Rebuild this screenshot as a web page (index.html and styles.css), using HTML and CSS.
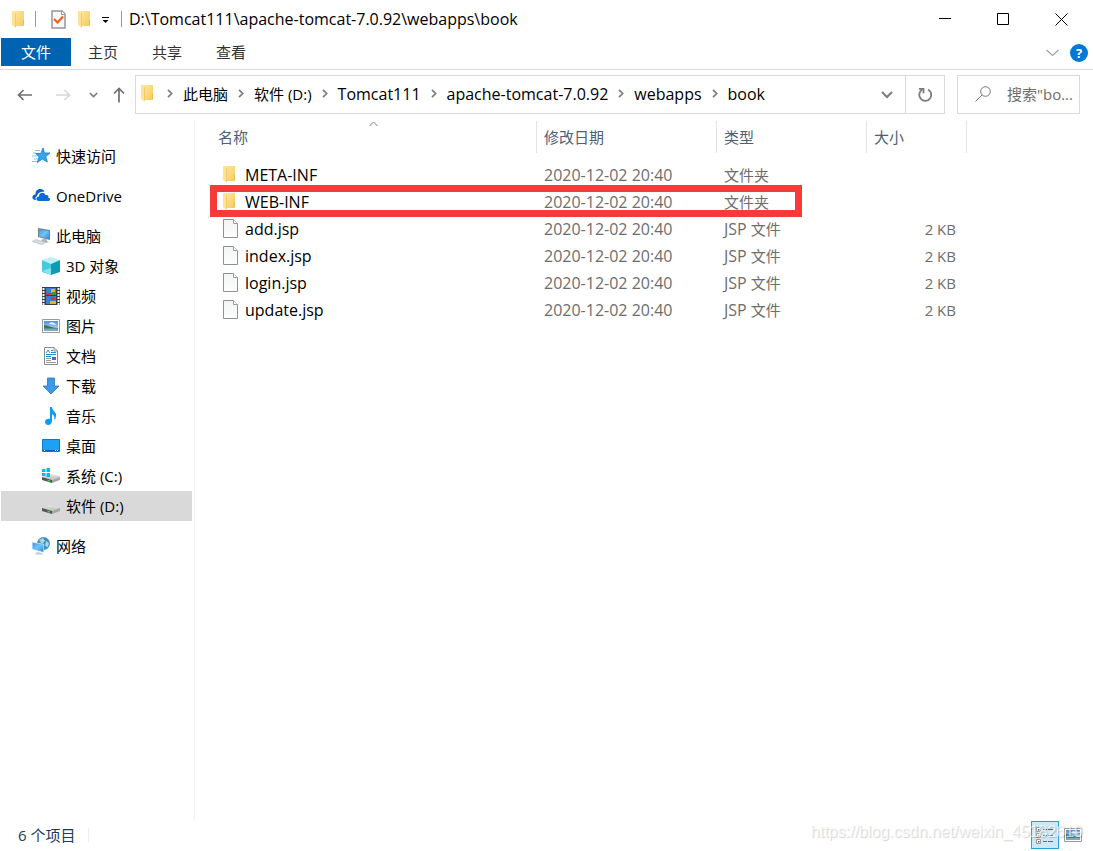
FILE: index.html
```html
<!DOCTYPE html>
<html lang="zh-CN">
<head>
<meta charset="utf-8">
<meta name="viewport" content="width=device-width, initial-scale=1">
<title>D:\Tomcat111\apache-tomcat-7.0.92\webapps\book</title>
<link rel="stylesheet" href="styles.css">
</head>
<body>
<svg class="defs" aria-hidden="true">
  <defs>
    <linearGradient id="gFolder" x1="0" x2="1" y1="0" y2="1"><stop offset="0" stop-color="#ffe8a2"/><stop offset="1" stop-color="#f5cb5c"/></linearGradient>
    <linearGradient id="gPage" x1="0" x2="0" y1="0" y2="1"><stop offset="0" stop-color="#f3f4f5"/><stop offset="1" stop-color="#fdfdfd"/></linearGradient>
    <linearGradient id="gScreen" x1="0" x2="1" y1="0" y2="1"><stop offset="0" stop-color="#3d9be0"/><stop offset=".5" stop-color="#6fc3f7"/><stop offset="1" stop-color="#2f8ddb"/></linearGradient>
    <linearGradient id="gDrive" x1="0" x2="0" y1="0" y2="1"><stop offset="0" stop-color="#e6e6e6"/><stop offset="1" stop-color="#bdbdbd"/></linearGradient>
    <linearGradient id="gSky" x1="0" x2="0" y1="0" y2="1"><stop offset="0" stop-color="#4a90e0"/><stop offset="1" stop-color="#cfe9f7"/></linearGradient>
    <symbol id="folder" viewBox="0 0 12 17"><path d="M2 0h10v14l-1 1H2z" fill="url(#gFolder)"/><path d="M11 9h1v5l-1 1z" fill="#e9ba4c"/><path d="M0 0h2l1.500 2v15L0 14z" fill="#ffe394"/><path d="M3.500 2v14" stroke="#e8bd58" stroke-width=".6"/></symbol>
    <symbol id="page" viewBox="0 0 15 19"><path d="M.5 .5h10l4 4v14H.5z" fill="url(#gPage)" stroke="#8e9092"/><path d="M10.500 .5v4h4" fill="#fff" stroke="#9a9c9e"/></symbol>
    <symbol id="picture" viewBox="0 0 18 14"><path d="M.5 .5h17v13H.5z" fill="#fff" stroke="#9b9b9b"/><path d="M2 2h14v10H2z" fill="url(#gSky)"/><path d="M2 6c4 0 7 3 14 3v1H2z" fill="#3f735e"/><path d="M2 9.500h14V12H2z" fill="#7fa9bf"/><path d="M7 5c1-3 6-2 7 1z" fill="#e6f3fc"/></symbol>
    <symbol id="drive" viewBox="0 0 18 10"><path d="M0 4l8-3 10 2v1l-8 3z" fill="url(#gDrive)"/><path d="M0 4l10 3v3L0 7z" fill="#555"/><path d="M10 7l8-3v3l-8 3z" fill="#a5a5a5"/><path d="M5.500 6.500l2.500.8v1.500L5.500 8z" fill="#35dc35"/></symbol>
    <symbol id="sep" viewBox="0 0 6 9"><path d="M1 .8l3.700 3.700L1 8.200" fill="none" stroke="#7c7c7c" stroke-width="1.700"/></symbol>
  </defs>
</svg>

<div class="window">
  <header class="titlebar">
    <svg class="folder" aria-hidden="true"><use href="#folder"/></svg>
    <span class="divider"></span>
    <button class="quick quick-check" aria-label="属性"><svg width="15" height="19" viewBox="0 0 15 19"><path d="M1 1h10l3 3v14H1z" fill="#f8f8f8" stroke="#969696" stroke-width="1.500"/><path d="M10.500 1v3.500H14" fill="#fff" stroke="#969696"/><path d="M3 9l3.500 3.500L12 6.500" fill="none" stroke="#f05a1e" stroke-width="2"/></svg></button>
    <button class="quick" aria-label="新建文件夹"><svg class="folder"><use href="#folder"/></svg></button>
    <button class="quick quick-more" aria-label="自定义快速访问工具栏"><svg width="8" height="7" viewBox="0 0 8 7"><path d="M0 .5h7" stroke="#000"/><path d="M.5 3h6l-3 3z"/></svg></button>
    <span class="divider"></span>
    <h1 class="title">D:\Tomcat111\apache-tomcat-7.0.92\webapps\book</h1>
    <div class="controls">
      <button aria-label="最小化"><svg width="13" height="13" viewBox="0 0 13 13"><path d="M0 5.500h12" stroke="#000"/></svg></button>
      <button aria-label="最大化"><svg width="13" height="13" viewBox="0 0 13 13"><path d="M.5 .5h11v11H.5z" fill="none" stroke="#000"/></svg></button>
      <button aria-label="关闭"><svg width="13" height="13" viewBox="0 0 13 13"><path d="M.5 .5l12 12m0-12l-12 12" stroke="#000"/></svg></button>
    </div>
  </header>

  <nav class="ribbon" aria-label="功能区">
    <button class="tab tab-file">文件</button>
    <button class="tab">主页</button>
    <button class="tab">共享</button>
    <button class="tab">查看</button>
    <div class="ribbon-end">
      <button aria-label="展开功能区"><svg width="13" height="8" viewBox="0 0 13 8"><path d="M.5 1l6 5.500 6-5.500" fill="none" stroke="#a0a0a0" stroke-width="1.200"/></svg></button>
      <button class="help" aria-label="帮助">?</button>
    </div>
  </nav>

  <div class="address-row">
    <div class="history">
      <button aria-label="后退"><svg width="16" height="12" viewBox="0 0 16 12"><path d="M15 6H1.500M6.500 1l-5 5 5 5" fill="none" stroke="#707070" stroke-width="1.700"/></svg></button>
      <button aria-label="前进"><svg width="16" height="12" viewBox="0 0 16 12"><path d="M1 6h13.500M9.500 1l5 5-5 5" fill="none" stroke="#d8d8d8" stroke-width="1.700"/></svg></button>
      <button aria-label="最近浏览的位置"><svg width="9" height="6" viewBox="0 0 9 6"><path d="M.8 1l3.700 3.500L8.200 1" fill="none" stroke="#7c7c7c" stroke-width="1.700"/></svg></button>
      <button aria-label="上移"><svg width="12" height="16" viewBox="0 0 12 16"><path d="M6 15.500V1.500M1 6.500l5-5 5 5" fill="none" stroke="#707070" stroke-width="1.700"/></svg></button>
    </div>
    <div class="address">
      <div class="crumbs">
        <svg class="folder" aria-hidden="true"><use href="#folder"/></svg>
        <svg class="sep" aria-hidden="true"><use href="#sep"/></svg><a href="#">此电脑</a>
        <svg class="sep" aria-hidden="true"><use href="#sep"/></svg><a href="#">软件 (D:)</a>
        <svg class="sep" aria-hidden="true"><use href="#sep"/></svg><a href="#" class="latin">Tomcat111</a>
        <svg class="sep" aria-hidden="true"><use href="#sep"/></svg><a href="#" class="latin">apache-tomcat-7.0.92</a>
        <svg class="sep" aria-hidden="true"><use href="#sep"/></svg><a href="#" class="latin">webapps</a>
        <svg class="sep" aria-hidden="true"><use href="#sep"/></svg><a href="#" class="latin">book</a>
      </div>
      <button class="drop" aria-label="以前的位置"><svg width="12" height="8" viewBox="0 0 12 8"><path d="M1 1l5 5 5-5" fill="none" stroke="#7c7c7c" stroke-width="2"/></svg></button>
      <button class="refresh" aria-label="刷新"><svg width="16" height="16" viewBox="0 0 16 16"><path d="M11 2.500A6 6 0 1 1 5 2.800M2 1.800h4.500v4.500" fill="none" stroke="#7c7c7c" stroke-width="1.800"/></svg></button>
    </div>
    <label class="search">
      <svg width="16" height="16" viewBox="0 0 16 16" aria-hidden="true"><circle cx="10.500" cy="5.500" r="4.800" fill="none" stroke="#777"/><path d="M7 9L.5 15.500" stroke="#777"/></svg>
      <input type="text" placeholder='搜索"bo...' aria-label="搜索">
    </label>
  </div>

  <div class="body">
    <nav class="tree" aria-label="导航窗格">
      <a href="#" class="node group"><svg viewBox="0 0 18 18"><path d="M11 1l1.600 5H18l-4.200 3.500 1.500 5.500-5-3-5 3.500 1.800-5.800L3.500 6.500h5.300z" fill="#35a5ee" stroke="#1878c4" stroke-width=".8"/><path d="M3 3.500h5M1 6h3M0 9h5M2 12h4M0 14.500h5" stroke="#7cc7f3"/></svg>快速访问</a>
      <a href="#" class="node group"><svg viewBox="0 0 18 18"><path d="M3 13C-1 12.500 0 7 3.500 7.500 3 2 10 0 12.500 4.500L9 5c-3 1-4 3-3.800 4-2 1-2 2.500-1.200 4z" fill="#0a64c4"/><path d="M7 14c-3.500-.5-3.500-4 0-4.500 0-4 5-5 6.500-1.500 3-.5 3.500 1.500 2.500 2.500 3 .5 2.500 3.500 0 3.500z" fill="#0a6cd6"/></svg>OneDrive</a>
      <a href="#" class="node group"><svg viewBox="0 0 18 18"><path d="M6 1l12 2v10L6 10z" fill="#75808a"/><path d="M7 2.200l10 1.800v8L7 9.200z" fill="url(#gScreen)"/><path d="M11 11.500l4 1v1.500l2 1-3 1-5-2z" fill="#aeb5ba"/><path d="M0 14.500l4-2 9 3-3 2.200z" fill="#d9dcdf" stroke="#b4b9bd" stroke-width=".6"/></svg>此电脑</a>
      <a href="#" class="node child"><svg viewBox="0 0 18 18"><path d="M9 0l9 3-9 4-9-4z" fill="#b9f1f5"/><path d="M0 3l9 4v11l-9-3z" fill="#48c9de"/><path d="M18 3L9 7v11l9-3z" fill="#0d9bb5"/><path d="M0 14l9-3v7z" fill="#8be2ec"/></svg>3D 对象</a>
      <a href="#" class="node child"><svg viewBox="0 0 18 18"><path d="M0 0h18v18H0z" fill="#3d3d3d"/><path d="M4 1h10v7H4zm0 8h10v8H4z" fill="#3b7fd2"/><path d="M4 6h6l2 2H4zm5 4h4v3H9z" fill="#d63826"/><path d="M9 2h4v4H9zm-1 12h6v3H8z" fill="#e2b52a"/><path d="M10 5h3v3h-3z" fill="#3f9638"/><path d="M1.500 1v17M16.500 1v17" stroke="#f4f4f4" stroke-width="2" stroke-dasharray="2 1"/></svg>视频</a>
      <a href="#" class="node child"><svg viewBox="0 -2 18 18"><use href="#picture" width="18" height="14"/></svg>图片</a>
      <a href="#" class="node child"><svg viewBox="0 0 18 18"><path d="M2.500 .5H12L15.500 4v13.500h-13z" fill="#fff" stroke="#8c8c8c"/><path d="M12 .5V4h3.500" fill="none" stroke="#8c8c8c"/><path d="M4 6l2-3 2 3M9 3.500h2M4 7.500h10M4 9.500h5M9 5.500h5" fill="none" stroke="#1d94d8"/><path d="M4 11.500h5M4 13.500h5M4 15.500h10" stroke="#9a9a9a"/><path d="M10 10h4v3h-4z" fill="#397ba8"/></svg>文档</a>
      <a href="#" class="node child"><svg viewBox="0 0 18 18"><path d="M5.500 1h7v8H17l-8 8-8-8h4.500z" fill="#3f97e8" stroke="#2878bd" stroke-width=".8"/></svg>下载</a>
      <a href="#" class="node child"><svg viewBox="0 0 18 18"><path d="M8 0h2c0 4 5 5 4 9 0 2-1 3-2 4 1-3 0-5-2-6v7c0 5-7 5-7 1 0-2 2-4 5-3z" fill="#0c9bf5"/></svg>音乐</a>
      <a href="#" class="node child"><svg viewBox="0 0 18 18"><path d="M.5 2.500h17v12H.5z" fill="#1ba1fa" stroke="#0b78d0"/><path d="M1 13.500h16" stroke="#0b5fae"/><path d="M2 13.500h1m10 0h1m1 0h1" stroke="#fff"/></svg>桌面</a>
      <a href="#" class="node child"><svg viewBox="0 0 18 18"><use href="#drive" x="0" y="6" width="18" height="10"/><path d="M0 2h3.500v3H0zm4.500-1H8v4H4.500zM0 6h3.500v3H0zm4.500 0H8v4H4.500z" fill="#12b4ee"/></svg>系统 (C:)</a>
      <a href="#" class="node child selected"><svg viewBox="0 0 18 18"><use href="#drive" x="0" y="7" width="18" height="10"/></svg>软件 (D:)</a>
      <a href="#" class="node group"><svg viewBox="0 0 18 18"><circle cx="11.500" cy="6.500" r="6.500" fill="#448fb9"/><path d="M7 3l4-2 2 3-3 3zm7 1l3 2-1 4-3-1z" fill="#a7d7e6"/><path d="M0 5l12 2v9L0 13z" fill="#e4f3fd"/><path d="M.5 5.500l11 2v7.500l-11-3z" fill="url(#gScreen)"/><path d="M5 15l5 1 1 1.500H3z" fill="#c3cbd1"/></svg>网络</a>
    </nav>

    <main class="files">
      <table>
        <colgroup><col class="c-name"><col class="c-date"><col class="c-type"><col class="c-size"><col></colgroup>
        <thead>
          <tr><th>名称<svg class="sort" width="9" height="6" viewBox="0 0 9 6" aria-label="升序"><path d="M.5 5l4-4 4 4" fill="none" stroke="#777"/></svg></th><th>修改日期</th><th>类型</th><th>大小</th><th></th></tr>
        </thead>
        <tbody>
          <tr><td><span class="file"><svg class="folder"><use href="#folder"/></svg>META-INF</span></td><td>2020-12-02 20:40</td><td>文件夹</td><td></td><td></td></tr>
          <tr class="marked"><td><span class="file"><svg class="folder"><use href="#folder"/></svg>WEB-INF</span><span class="marker"></span></td><td>2020-12-02 20:40</td><td>文件夹</td><td></td><td></td></tr>
          <tr><td><span class="file"><svg class="page"><use href="#page"/></svg>add.jsp</span></td><td>2020-12-02 20:40</td><td><span class="latin">JSP </span>文件</td><td>2 KB</td><td></td></tr>
          <tr><td><span class="file"><svg class="page"><use href="#page"/></svg>index.jsp</span></td><td>2020-12-02 20:40</td><td><span class="latin">JSP </span>文件</td><td>2 KB</td><td></td></tr>
          <tr><td><span class="file"><svg class="page"><use href="#page"/></svg>login.jsp</span></td><td>2020-12-02 20:40</td><td><span class="latin">JSP </span>文件</td><td>2 KB</td><td></td></tr>
          <tr><td><span class="file"><svg class="page"><use href="#page"/></svg>update.jsp</span></td><td>2020-12-02 20:40</td><td><span class="latin">JSP </span>文件</td><td>2 KB</td><td></td></tr>
        </tbody>
      </table>
    </main>
  </div>

  <footer class="status">
    <span class="count">6 个项目</span>
    <div class="views">
      <button class="active" aria-label="详细信息"><svg width="18" height="17" viewBox="0 0 18 17"><path d="M.5 .5h4v4h-4zm0 6h4v4h-4zm0 6h4v4h-4z" fill="#fff" stroke="#999"/><path d="M2 2h1.500v1.500H2z" fill="#456"/><path d="M2 8h1.500v1.500H2z" fill="#d09a30"/><path d="M2 14h1.500v1.500H2z" fill="#b33"/><path d="M7 2.500h4m1 0h5M7 8.500h4m1 0h5M7 14.500h4m1 0h5" stroke="#666"/></svg></button>
      <button aria-label="大图标"><svg width="18" height="14"><use href="#picture"/></svg></button>
    </div>
    <span class="watermark">https://blog.csdn.net/weixin_45182619</span>
  </footer>
</div>
</body>
</html>
```
FILE: styles.css
```css
* { box-sizing: border-box; }

body {
  margin: 0;
  background: #fff;
  color: #000;
  font: 15px/20px "Open Sans", "Noto Sans CJK SC", sans-serif;
}

button {
  display: flex;
  align-items: center;
  justify-content: center;
  margin: 0;
  padding: 0;
  border: 0;
  background: none;
  color: inherit;
  font: inherit;
}

a { color: inherit; text-decoration: none; }
svg { flex: none; }
.defs { position: absolute; width: 0; height: 0; }
.folder { width: 12px; height: 17px; }
.page { width: 15px; height: 19px; }
.latin { font-size: 16px; }

.window { display: flex; flex-direction: column; min-height: 100vh; }

.titlebar { display: flex; align-items: center; height: 38px; padding: 0 3px 0 12px; }
.divider { width: 1px; height: 16px; margin: 0 7px 0 11px; background: #999; }
.quick-check { margin: 0 12px 0 8px; }
.quick-more { margin-left: 12px; padding-top: 3px; }
.title { flex: 1; margin: 0; font-size: 16px; font-weight: 400; white-space: nowrap; }
.controls { display: flex; }
.controls button { width: 58px; height: 38px; }

.ribbon { display: flex; height: 32px; padding-left: 1px; border-bottom: 1px solid #dadada; }
.tab { width: 64px; height: 28px; color: #333; }
.tab-file { width: 70px; background: #0063b1; color: #fff; }
.ribbon-end { display: flex; align-items: center; gap: 11px; height: 30px; margin-left: auto; padding-right: 5px; }
.help { width: 18px; height: 18px; border-radius: 50%; background: #0078d7; color: #fff; font-size: 13px; font-weight: 700; line-height: 18px; }

.address-row { display: flex; padding: 5px 13px 0 0; }
.history { display: flex; width: 135px; padding-left: 17px; gap: 22px; align-items: center; }
.history button:nth-child(n + 3) { margin-left: -4px; }
.history button:last-child { margin-left: -7px; }
.address { display: flex; flex: 1; height: 39px; border: 1px solid #d9d9d9; }
.crumbs { display: flex; flex: 1; align-items: center; padding: 0 0 2px 5px; white-space: nowrap; }
.sep { width: 6px; height: 9px; margin: 0 10px; }
.crumbs .folder + .sep { margin-left: 14px; }
.drop { width: 36px; }
.refresh { width: 39px; border-left: 1px solid #d9d9d9; }
.search { display: flex; align-items: center; gap: 16px; width: 123px; height: 39px; margin-left: 12px; padding: 0 0 2px 17px; border: 1px solid #d9d9d9; }
.search input { flex: 1; min-width: 0; padding: 0; border: 0; outline: 0; background: none; font: inherit; }
.search input::placeholder { color: #6d6d6d; opacity: 1; }

.body { display: flex; flex: 1; padding-top: 7px; }
.tree { width: 195px; padding-top: 20px; border-right: 1px solid #f3f3f3; }
.node { display: flex; align-items: center; gap: 6px; height: 30px; margin: 0 2px 0 1px; }
.node svg { width: 18px; height: 18px; }
.group { margin-bottom: 10px; padding-left: 31px; }
.group:has(+ .child) { margin-bottom: 0; }
.child { padding-left: 41px; }
.selected { margin-bottom: 10px; background: #d9d9d9; }

.files { flex: 1; min-width: 0; padding-left: 14px; }
table { width: 100%; table-layout: fixed; border-collapse: separate; border-spacing: 0; }
.c-name { width: 328px; }
.c-date { width: 180px; }
.c-type { width: 150px; }
.c-size { width: 100px; }
th { height: 32px; padding: 0 7px; border-right: 1px solid #e3e3e3; color: #4c607a; font-weight: 400; text-align: left; }
th:first-child { position: relative; padding-left: 9px; }
th:last-child { border-right: 0; }
.sort { position: absolute; top: 0; left: 50%; margin-left: -4px; }
thead::after { content: ""; display: table-row; height: 9px; }
td { height: 27px; padding: 0 7px 2px; color: #6d6d6d; white-space: nowrap; }
td:first-child { padding-left: 14px; color: #000; font-size: 16px; }
td:nth-child(2) { font-size: 16px; }
td:nth-child(4) { padding-right: 11px; text-align: right; }
.file { display: flex; align-items: center; }
.file .folder { margin-right: 10px; }
.file .page { margin-right: 7px; }
.marked { position: relative; }
.marker { position: absolute; top: -4px; bottom: -1px; left: 1px; width: 592px; border: 7px solid #fc3939; }

.status { display: flex; align-items: center; position: relative; height: 30px; padding: 0 11px 2px 18px; color: #1e395b; }
.count { padding-right: 13px; border-right: 1px solid #eee; line-height: 14px; }
.views { display: flex; align-items: center; gap: 5px; margin-left: auto; }
.views button { height: 28px; }
.views .active { width: 28px; border: 1px solid #26a0da; background: #cbe8f6; }
.watermark { position: absolute; right: 10px; bottom: 9px; color: rgba(255, 255, 255, .7); font: 16px/20px "Liberation Sans", Arial, sans-serif; text-shadow: 1px 1px 1px rgba(0, 0, 0, .18); pointer-events: none; }
```
